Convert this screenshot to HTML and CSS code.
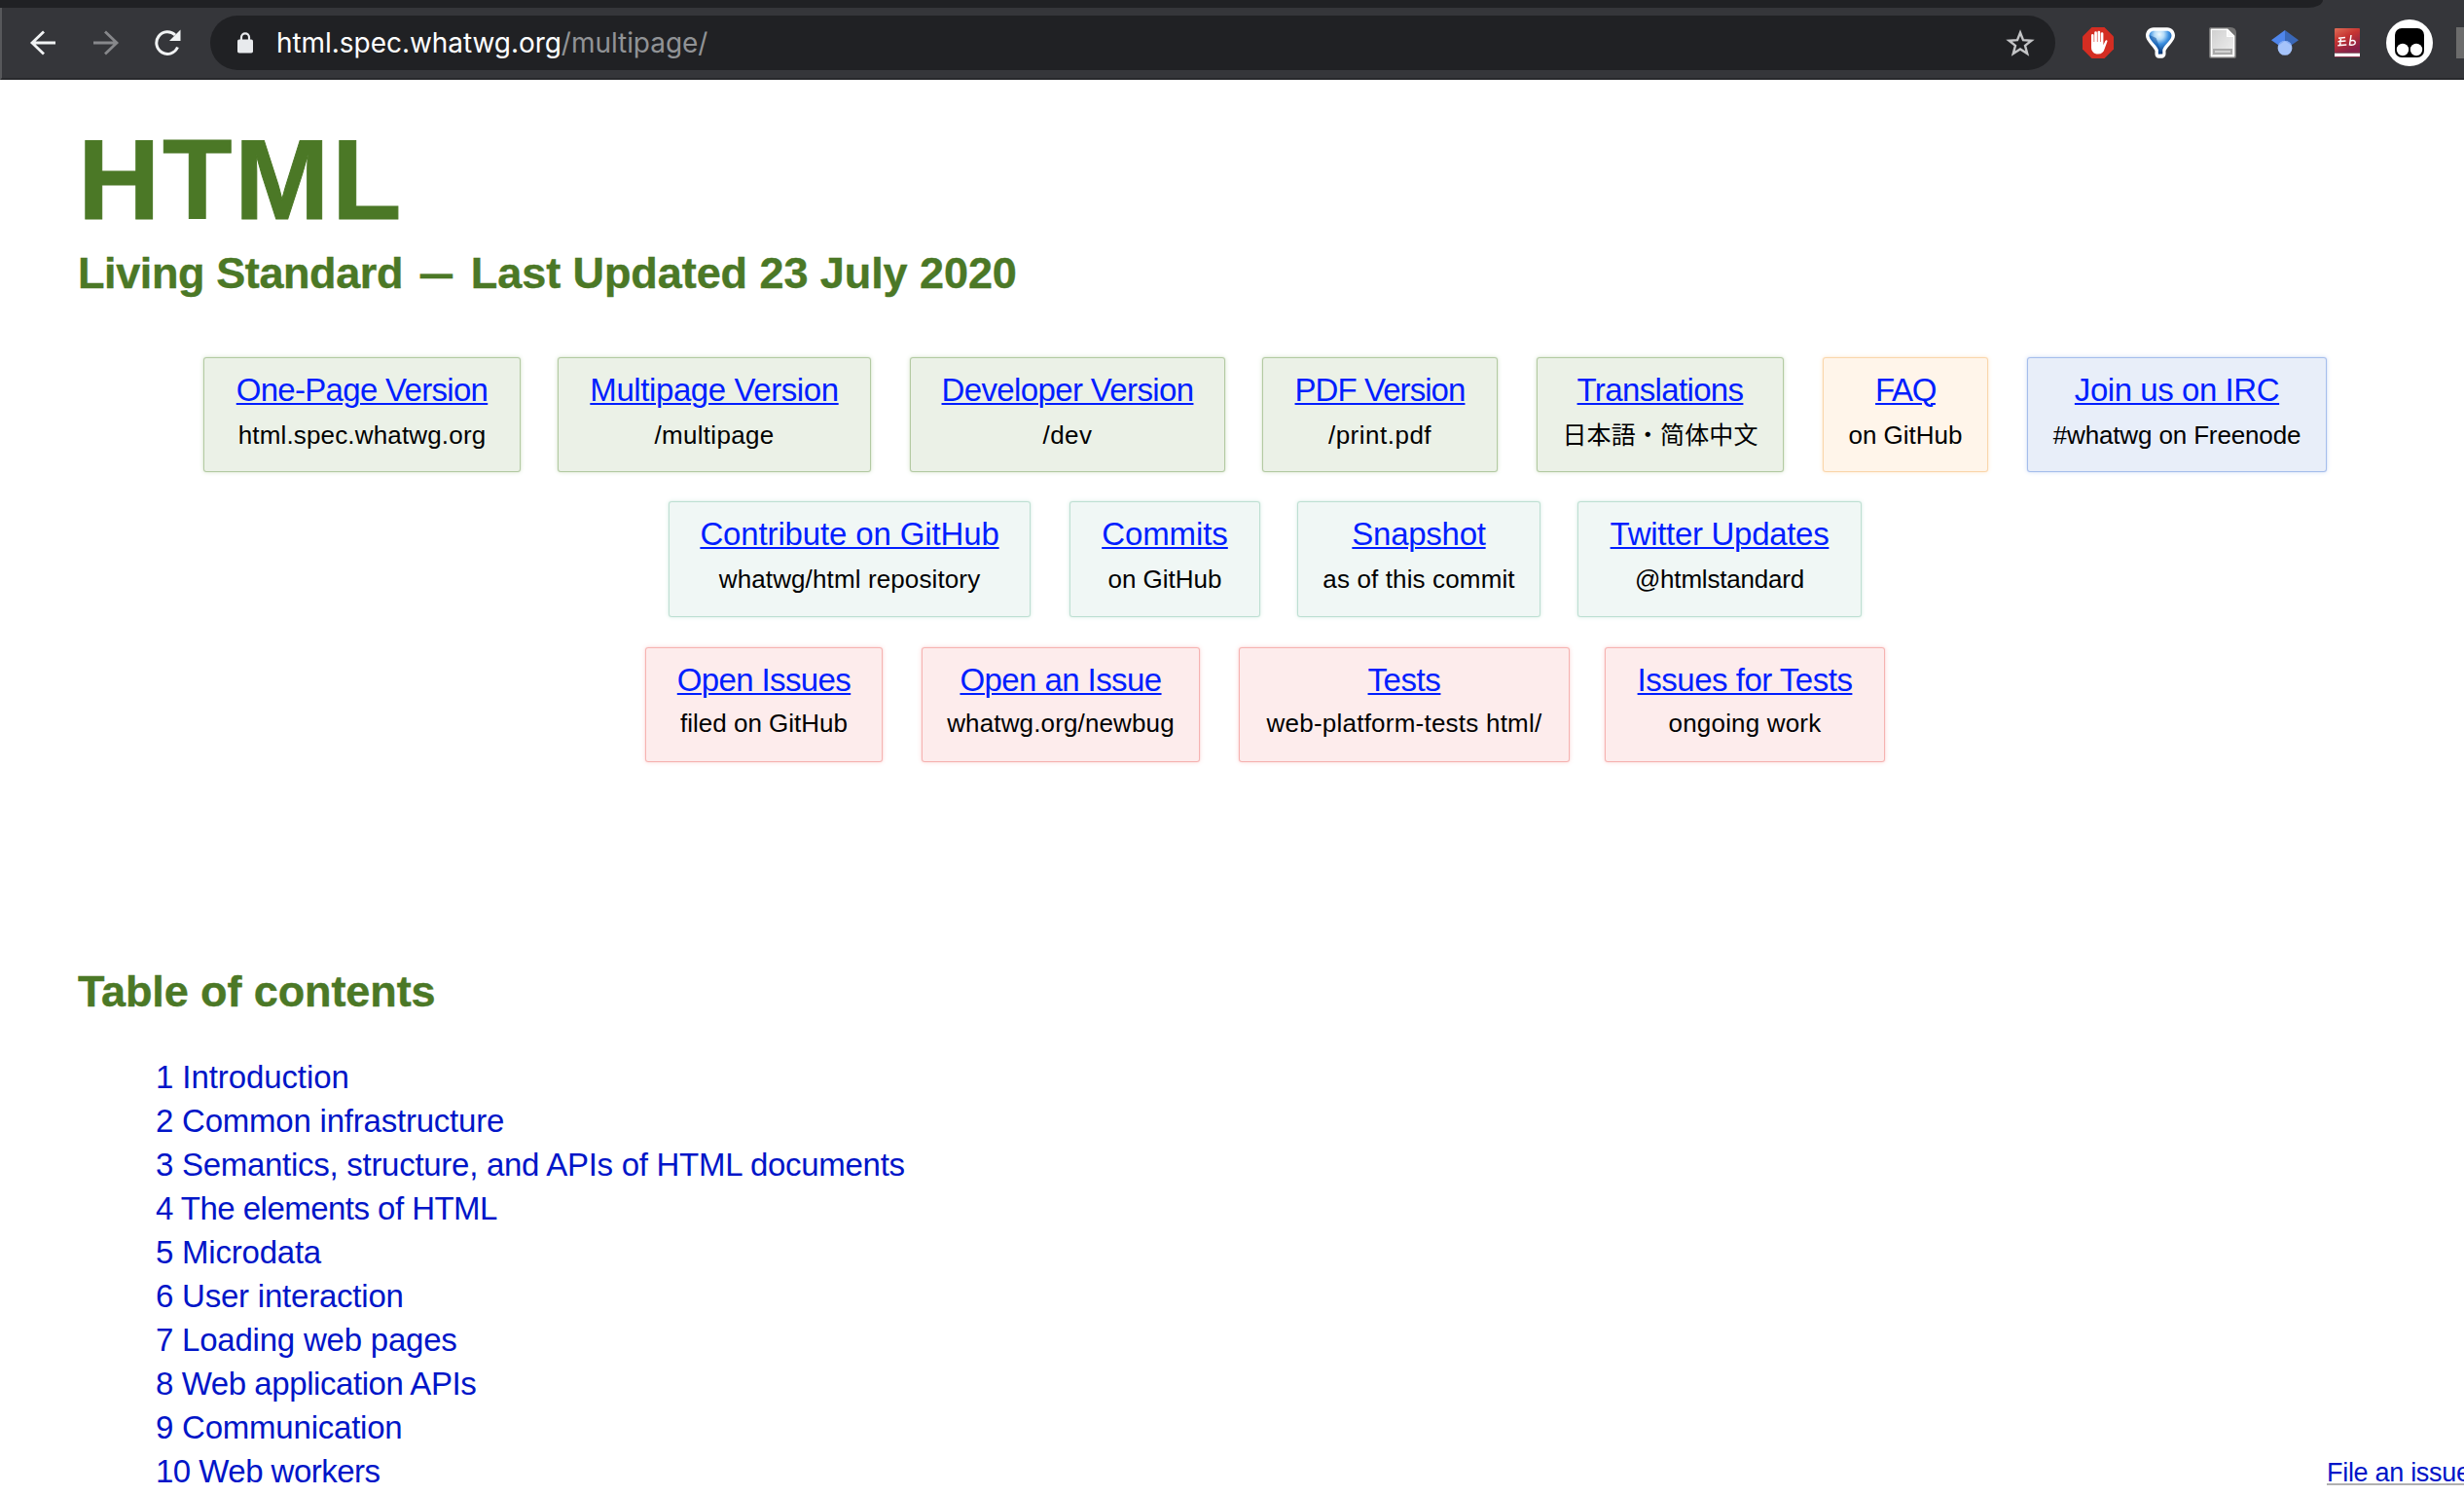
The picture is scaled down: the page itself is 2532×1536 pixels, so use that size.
FILE: index.html
```html
<!DOCTYPE html>
<html lang="en">
<head>
<meta charset="utf-8">
<title>HTML Standard</title>
<link rel="stylesheet" href="styles.css">
</head>
<body>
<div class="tabstrip"></div>
<div class="toolbar">
  <svg class="nav-icon back" viewBox="0 0 28 28"><path d="M15 2.500L3 14L15 25.500M3.500 14H27"/></svg>
  <svg class="nav-icon forward" viewBox="0 0 28 28"><path d="M13 2.500L25 14L13 25.500M24.500 14H1"/></svg>
  <svg class="nav-icon reload" viewBox="0 0 28 28"><path d="M24.500 18.500A11.300 11.300 0 1 1 22 6"/><path class="solid" d="M27.500 0.500V12H16z"/></svg>
  <div class="omnibox">
    <svg class="lock" viewBox="0 0 16 22"><rect y="7.500" width="16" height="14" rx="1.800"/><path d="M4 8.500V5.300a4 4 0 0 1 8 0V8.500"/></svg>
    <span class="url">html.spec.whatwg.org<span class="path">/multipage/</span></span>
    <svg class="star" viewBox="0 0 30 28"><path d="M15 3.500L18 11.200L26.500 11.700L20 16.900L22.200 25L15 20.500L7.800 25L10 16.900L3.500 11.700L12 11.200z"/></svg>
  </div>
  <div class="extensions">
    <svg width="32" height="32" viewBox="0 0 32 32"><path fill="#d42d22" d="M9.500 0h13L32 9.500v13L22.500 32h-13L0 22.500v-13z"/><path fill="#fff" d="M9 8.200a1.300 1.300 0 0 1 2.600 0V15h.6V5.700a1.350 1.350 0 0 1 2.700 0V15h.6V5a1.350 1.350 0 0 1 2.700 0v10h.6V6.600a1.300 1.300 0 0 1 2.600 0v11.600l2-4.300c.6-1.200 2.600-.9 2 .8L22.700 22c-1 3.600-3 5.500-6.700 5.500-4.500 0-7-2.700-7-7z"/></svg>
    <svg width="32" height="34" viewBox="0 0 32 34"><defs><radialGradient id="gem" cx=".45" cy=".15" r=".85"><stop offset="0" stop-color="#eefaff"/><stop offset=".25" stop-color="#b5dcf8"/><stop offset=".5" stop-color="#3b8fe0"/><stop offset="1" stop-color="#062f6b"/></radialGradient></defs><path fill="#fff" d="M9 1.200h14c5 0 8 4 8 8.300 0 5.500-6.500 10-9.500 15.500v3.500c0 2.500-2 4.200-4 4.200h-3c-2.500 0-4-1.700-4-4.200V25C7.500 19.500 1 15 1 9.500c0-4.300 3-8.300 8-8.300z"/><path fill="url(#gem)" d="M9.500 4.800h13c3 0 5 2.200 5 5 0 4.200-6.500 8.200-9.200 14.200v4.500h-4.400V24C11 18 4.500 14 4.500 9.800c0-2.800 2-5 5-5z"/><path fill="#0a4b9c" opacity=".5" d="M4.600 9l7 3 4.500 12V28.500h-2.200V24C11 18 4.500 14 4.600 9z"/></svg>
    <svg width="28" height="32" viewBox="0 0 28 32"><defs><linearGradient id="page" x2="1" y2="1"><stop offset="0" stop-color="#d0d0d0"/><stop offset="1" stop-color="#f0f0f0"/></linearGradient></defs><path fill="#fff" stroke="#737373" stroke-width="1.600" d="M2 .8h17.500L27.200 8.500V30q0 1.200-1.200 1.200H2Q.8 31.200.8 30V2Q.8.800 2 .8z"/><path fill="url(#page)" d="M3 3h15v7h7v19H3z"/><path fill="#737373" d="M19 0l9 9v-3q0-6-6-6z"/><path fill="#f8f8f8" d="M19 3l6 6h-6z"/><path fill="#a9a9a9" d="M4 22h20v6H4z"/><path fill="#d2d2d2" d="M6 24h16v2H6z"/></svg>
    <svg width="28" height="26" viewBox="0 0 28 26"><path fill="#4f86ec" d="M14 0v20L0 10.200z"/><path fill="#3a68b8" d="M14 0l14 10.200L14 20z"/><circle cx="14" cy="18.400" r="7.400" fill="#a5c3fa"/><path fill="#84abf4" d="M7 16a7.400 7.400 0 0 1 14 0L14 11z"/></svg>
    <svg width="26" height="30" viewBox="0 0 26 30"><defs><linearGradient id="book" x2=".5" y2="1"><stop offset="0" stop-color="#df6d57"/><stop offset=".45" stop-color="#c63431"/><stop offset="1" stop-color="#872149"/></linearGradient></defs><path fill="url(#book)" d="M0 1q0-1 1-1h24q1 0 1 1v24H0z"/><path fill="#fff" d="M0 25.500h26V29H0z"/><path fill="#87304a" d="M0 24.500h26v1H0zM0 29h26v1H0z"/><path fill="none" stroke="#fff" stroke-width="1.500" d="M4 10.200l7-.7M6.500 10L5.500 17.500M3.500 13.700l8-.8M3.300 17.800l9-.8M17 7L15.500 17q5.500 1 5.800-2.300-.3-3-5.300-1.700"/></svg>
    <svg width="48" height="48" viewBox="0 0 48 48"><circle cx="24" cy="24" r="24" fill="#fff"/><rect x="9" y="9" width="30" height="30" rx="7"/><circle cx="17" cy="31" r="6.200" fill="#fff"/><circle cx="31" cy="31" r="6.200" fill="#fff"/></svg>
    <span class="clipped-extension"></span>
  </div>
</div>

<main>
  <header>
    <h1>HTML</h1>
    <h2 class="subtitle"><span class="standard">Living Standard</span> <span class="dash">—</span> Last Updated 23 July 2020</h2>
  </header>

  <nav class="cards">
    <div class="row first">
      <div class="card green one-page"><a href="#">One-Page Version</a><span>html.spec.whatwg.org</span></div>
      <div class="card green multipage"><a href="#">Multipage Version</a><span>/multipage</span></div>
      <div class="card green developer"><a href="#">Developer Version</a><span>/dev</span></div>
      <div class="card green pdf"><a href="#">PDF Version</a><span>/print.pdf</span></div>
      <div class="card green translations"><a href="#">Translations</a><span lang="ja">日本語・<span lang="zh-Hans">简体中文</span></span></div>
      <div class="card orange faq"><a href="#">FAQ</a><span>on GitHub</span></div>
      <div class="card blue irc"><a href="#">Join us on IRC</a><span>#whatwg on Freenode</span></div>
    </div>
    <div class="row">
      <div class="card teal contribute"><a href="#">Contribute on GitHub</a><span>whatwg/html repository</span></div>
      <div class="card teal commits"><a href="#">Commits</a><span>on GitHub</span></div>
      <div class="card teal snapshot"><a href="#">Snapshot</a><span>as of this commit</span></div>
      <div class="card teal twitter"><a href="#">Twitter Updates</a><span>@htmlstandard</span></div>
    </div>
    <div class="row last">
      <div class="card red open-issues"><a href="#">Open Issues</a><span>filed on GitHub</span></div>
      <div class="card red new-issue"><a href="#">Open an Issue</a><span>whatwg.org/newbug</span></div>
      <div class="card red tests"><a href="#">Tests</a><span>web-platform-tests html/</span></div>
      <div class="card red test-issues"><a href="#">Issues for Tests</a><span>ongoing work</span></div>
    </div>
  </nav>

  <h2 class="toc-title">Table of contents</h2>
  <ol class="toc">
    <li><a class="loose" href="#">1 Introduction</a></li>
    <li><a href="#">2 Common infrastructure</a></li>
    <li><a class="snug" href="#">3 Semantics, structure, and APIs of HTML documents</a></li>
    <li><a class="tight" href="#">4 The elements of HTML</a></li>
    <li><a href="#">5 Microdata</a></li>
    <li><a href="#">6 User interaction</a></li>
    <li><a href="#">7 Loading web pages</a></li>
    <li><a class="close" href="#">8 Web application APIs</a></li>
    <li><a href="#">9 Communication</a></li>
    <li><a class="tight" href="#">10 Web workers</a></li>
  </ol>
</main>
<a class="file-issue" href="#">File an issue</a>
</body>
</html>
```
FILE: styles.css
```css
* { box-sizing: border-box; }

html, body {
  margin: 0;
  height: 1536px;
  overflow: hidden;
  background: #fff;
}

body {
  position: relative;
  font-family: "Liberation Sans", "Noto Sans CJK SC", Arial, sans-serif;
  color: #000;
}

svg { display: block; flex: none; }

/* Browser chrome */
.tabstrip {
  height: 8px;
  background: #35363a;
}

.tabstrip::before {
  content: "";
  display: block;
  width: 2387px;
  height: 8px;
  background: #202124;
  border-bottom-right-radius: 16px 8px;
}

.toolbar {
  display: flex;
  align-items: center;
  height: 74px;
  padding-left: 28px;
  background: #35363a;
  border-bottom: 2px solid #28292c;
  border-left: 2px solid #57585b;
}

.nav-icon {
  width: 28px;
  height: 28px;
  fill: none;
  stroke: #f1f3f4;
  stroke-width: 2.8;
}

.forward { margin-left: 37px; stroke: #87888b; }
.reload { margin-left: 35px; stroke-width: 3; }
.reload .solid { fill: #f1f3f4; stroke: none; }

.omnibox {
  display: flex;
  align-items: center;
  flex: none;
  width: 1896px;
  height: 56px;
  margin-left: 30px;
  padding: 0 21px 0 28px;
  border-radius: 28px;
  background: #202124;
}

.lock {
  width: 16px;
  height: 22px;
  margin-right: 24px;
  fill: #e8eaed;
}

.lock path { fill: none; stroke: #e8eaed; stroke-width: 2.2; }

.url {
  flex: 1;
  font: 28px/34px Inter, "Liberation Sans", sans-serif;
  letter-spacing: -0.05px;
  color: #fff;
}

.path { color: #919396; }

.star {
  width: 30px;
  height: 28px;
  fill: none;
  stroke: #c3c4c6;
  stroke-width: 2.4;
}

.extensions {
  display: flex;
  align-items: center;
  flex: none;
  margin-left: 28px;
}

.extensions svg:nth-child(2) { margin-left: 32px; }
.extensions svg:nth-child(3) { margin-left: 34px; }
.extensions svg:nth-child(4) { margin-left: 36px; }
.extensions svg:nth-child(5) { margin-left: 37px; }
.extensions svg:nth-child(6) { margin-left: 27px; }

.clipped-extension {
  width: 8px;
  height: 32px;
  margin-left: 24px;
  background: #6c6c6c;
}

/* Document */
main { padding: 37px 14px 0 80px; }

h1, h2 {
  margin: 0;
  font-weight: bold;
  color: #4b7826;
}

h1 {
  font-size: 117px;
  line-height: 132px;
  letter-spacing: 2.5px;
  -webkit-text-stroke: 1px #4b7826;
}

h2 {
  font-size: 45px;
  line-height: 51px;
  -webkit-text-stroke: 0.4px #4b7826;
}

.subtitle { margin-top: 4px; letter-spacing: -0.07px; }
.standard { letter-spacing: -0.4px; }
.dash { display: inline-block; transform: scaleX(0.74); }
.toc-title { margin-top: 211px; letter-spacing: -0.1px; }

.cards {
  display: flex;
  flex-direction: column;
  gap: 31px;
  margin-top: 62px;
  padding-left: 2px;
}

.row {
  display: flex;
  justify-content: center;
  gap: 41px;
}

.row.first { gap: 40px; }
.row.last { margin-top: 2px; }

.card {
  display: flex;
  flex-direction: column;
  align-items: center;
  flex: none;
  height: 117px;
  padding-top: 10px;
  border-radius: 2px;
  white-space: nowrap;
  box-shadow: 0 0 1px 1px var(--edge), 0 0 5px 1px var(--glow);
}

.first .card, .last .card { height: 116px; }
.first .card { margin-bottom: 1px; }

.card a {
  font-size: 33px;
  line-height: 45px;
  color: #001eff;
  text-decoration: underline 2px;
  text-underline-offset: 2px;
}

.card > span { font-size: 26px; line-height: 48px; }
.last .card > span { line-height: 44px; }

.green { background: #ebf1e7; --edge: #adc69b; --glow: #dbe7d3; }
.orange { background: #fff5ea; --edge: #fad3a5; --glow: #fdebd6; }
.blue { background: #e8eef9; --edge: #9eb8ea; --glow: #d5e1f7; }
.teal { background: #f0f7f5; --edge: #b9ddcf; --glow: #ddefe8; }
.red { background: #fdecec; --edge: #f5adab; --glow: #fbdada; }

.one-page { width: 324px; }
.one-page a { letter-spacing: -0.7px; }
.one-page span { letter-spacing: 0.16px; }
.multipage { width: 320px; }
.multipage a { letter-spacing: -0.41px; }
.multipage span { letter-spacing: 0.28px; }
.developer { width: 322px; margin-left: 2px; }
.developer a { letter-spacing: -0.63px; }
.developer span { letter-spacing: 0.45px; }
.pdf { width: 240px; }
.pdf a { letter-spacing: -0.94px; }
.pdf span { letter-spacing: 0.5px; }
.translations { width: 252px; margin-left: 2px; }
.translations a { letter-spacing: -0.64px; }
.translations > span {
  font-family: "Liberation Sans", "Noto Sans CJK JP", sans-serif;
  font-size: 25px;
  letter-spacing: 0.15px;
}
.translations > span > span { font-family: "Liberation Sans", "Noto Sans CJK SC", sans-serif; }
.faq { width: 168px; margin-left: 2px; }
.faq a { letter-spacing: -1.4px; }
.irc { width: 306px; margin-left: 2px; }
.irc a { letter-spacing: -0.44px; }
.irc span { letter-spacing: -0.14px; }

.contribute { width: 370px; margin-right: 1px; }
.contribute a { letter-spacing: -0.14px; }
.contribute span { letter-spacing: 0.12px; }
.commits { width: 194px; margin-right: -1px; }
.commits a { letter-spacing: -0.08px; }
.snapshot { width: 248px; margin-right: -1px; }
.snapshot a { letter-spacing: -0.27px; }
.snapshot span { letter-spacing: 0.14px; }
.twitter { width: 290px; }
.twitter a { letter-spacing: -0.3px; }
.twitter span { letter-spacing: -0.19px; }

.open-issues { width: 242px; margin-right: 1px; }
.open-issues a { letter-spacing: -0.62px; }
.new-issue { width: 284px; margin-right: 1px; }
.new-issue a { letter-spacing: -0.58px; }
.new-issue span { letter-spacing: 0.14px; }
.tests { width: 338px; margin-right: -3px; }
.tests a { letter-spacing: -0.42px; }
.tests span { letter-spacing: 0.23px; }
.test-issues { width: 286px; }
.test-issues a { letter-spacing: -0.49px; }
.test-issues span { letter-spacing: 0.18px; }

.toc {
  margin: 39.5px 0 0;
  padding-left: 80px;
  list-style: none;
  font-size: 33px;
  line-height: 45.11px;
}

.toc a {
  color: #0015c8;
  text-decoration: none;
  letter-spacing: -0.22px;
}

.toc .loose { letter-spacing: -0.09px; }
.toc .snug { letter-spacing: -0.28px; }
.toc .close { letter-spacing: -0.43px; }
.toc .tight { letter-spacing: -0.53px; }

/* Pinned over the bottom-right corner, running past the window edge */
.file-issue {
  position: absolute;
  left: 2391px;
  bottom: 8px;
  font-size: 27px;
  line-height: 30px;
  letter-spacing: -0.3px;
  white-space: nowrap;
  color: #0015c8;
  text-decoration: underline 2px #b0b0b0;
  text-decoration-skip-ink: none;
  text-underline-offset: 2px;
}
```
